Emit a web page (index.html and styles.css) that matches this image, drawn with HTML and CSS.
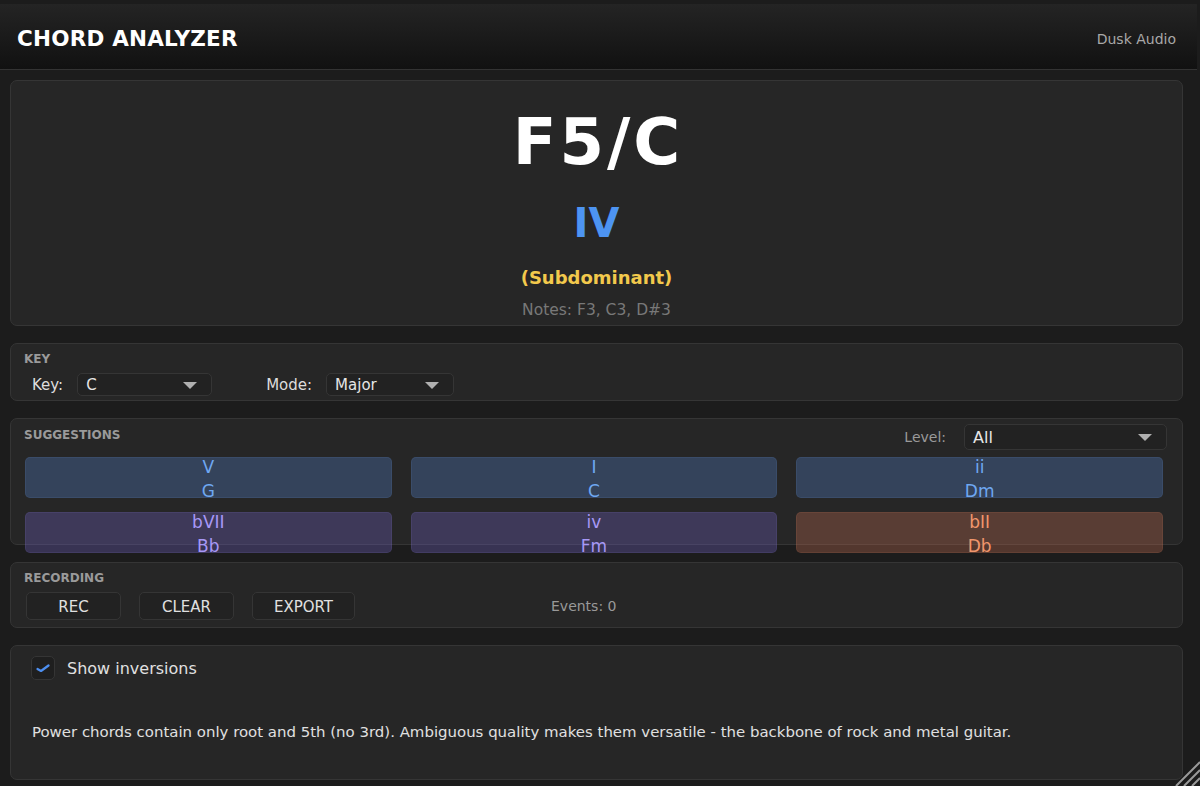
FILE: index.html
```html
<!DOCTYPE html>
<html lang="en">
<head>
    <meta charset="UTF-8">
    <meta name="viewport" content="width=device-width, initial-scale=1.0">
    <title>Chord Analyzer</title>
    <link rel="stylesheet" href="styles.css">
</head>
<body>
    <div class="header">
        <h1>CHORD ANALYZER</h1>
        <span class="brand">Dusk Audio</span>
    </div>

    <div class="main">
        <div class="panel chord">
            <div class="chord-name">F5/C</div>
            <div class="numeral">IV</div>
            <div class="function">(Subdominant)</div>
            <div class="notes">Notes: F3, C3, D#3</div>
        </div>

        <div class="panel key-panel">
            <div class="label">KEY</div>
            <div class="key-row">
                <span class="field-label">Key:</span>
                <div class="select key-select">C<span class="arrow"></span></div>
                <span class="field-label mode-label">Mode:</span>
                <div class="select mode-select">Major<span class="arrow"></span></div>
            </div>
        </div>

        <div class="panel suggestions">
            <div class="sugg-head">
                <div class="label">SUGGESTIONS</div>
                <span class="field-label level-label">Level:</span>
                <div class="select level-select">All<span class="arrow"></span></div>
            </div>
            <div class="sugg-grid">
                <div class="sugg blue"><span>V</span><span>G</span></div>
                <div class="sugg blue"><span>I</span><span>C</span></div>
                <div class="sugg blue"><span>ii</span><span>Dm</span></div>
                <div class="sugg purple"><span>bVII</span><span>Bb</span></div>
                <div class="sugg purple"><span>iv</span><span>Fm</span></div>
                <div class="sugg orange"><span>bII</span><span>Db</span></div>
            </div>
        </div>

        <div class="panel recording">
            <div class="label">RECORDING</div>
            <div class="rec-row">
                <button class="btn rec">REC</button>
                <button class="btn clear">CLEAR</button>
                <button class="btn export">EXPORT</button>
                <span class="events">Events: 0</span>
            </div>
        </div>

        <div class="panel info">
            <div class="check-row">
                <div class="checkbox">
                    <svg width="14" height="10" viewBox="0 0 14 10">
                        <path d="M1.5 6 L5 8 L12.5 2.5" fill="none" stroke="#4d8ff0" stroke-width="2.2" stroke-linecap="round" stroke-linejoin="round"/>
                    </svg>
                </div>
                <span>Show inversions</span>
            </div>
            <p class="desc">Power chords contain only root and 5th (no 3rd). Ambiguous quality makes them versatile - the backbone of rock and metal guitar.</p>
        </div>
    </div>

    <svg class="grip" width="26" height="26" viewBox="0 0 26 26">
        <path d="M26 2 L2 26 M26 10 L10 26 M26 18 L18 26" stroke="#9a9a9a" stroke-width="2"/>
    </svg>
</body>
</html>
```

FILE: styles.css
```css
body {
    font-family: "DejaVu Sans", sans-serif;
    margin: 0;
    padding: 4px 0 0 0;
    background-color: #1c1c1c;
    color: #dddddd;
    width: 1200px;
    height: 782px;
    overflow: hidden;
    position: relative;
}

.header {
    display: flex;
    align-items: center;
    justify-content: space-between;
    height: 66px;
    width: 1197px;
    padding: 4px 21px 0 17px;
    box-sizing: border-box;
    background: linear-gradient(#242424, #111111);
    border-bottom: 1px solid #333333;
}

.header h1 {
    margin: 0;
    font-size: 21.5px;
    font-weight: bold;
    color: #ffffff;
    letter-spacing: 0.2px;
}

.brand {
    font-size: 14px;
    color: #a8a8a8;
}

.main {
    padding: 10px 17px 0 10px;
    display: flex;
    flex-direction: column;
    gap: 17px;
}

.panel {
    background-color: #262626;
    border: 1px solid #353535;
    border-radius: 7px;
    box-sizing: border-box;
}

.label {
    font-size: 12px;
    font-weight: bold;
    color: #9a9a9a;
}

.field-label {
    font-size: 15px;
    color: #dddddd;
}

/* chord display */
.chord {
    height: 246px;
    display: flex;
    flex-direction: column;
    align-items: center;
}

.chord-name {
    font-size: 64px;
    font-weight: bold;
    color: #ffffff;
    margin-top: 21px;
    line-height: 80px;
    letter-spacing: 3px;
    padding-left: 3px;
}

.numeral {
    font-size: 40px;
    font-weight: bold;
    color: #4d94f2;
    line-height: 50px;
    margin-top: 16px;
}

.function {
    font-size: 18px;
    font-weight: bold;
    color: #f2c94c;
    margin-top: 18px;
    line-height: 24px;
}

.notes {
    font-size: 15.5px;
    color: #787878;
    margin-top: 11px;
}

/* key */
.key-panel {
    height: 58px;
    padding: 8px 0 0 13px;
}

.key-row {
    display: flex;
    align-items: center;
    margin-top: 7px;
    padding-left: 8px;
}

.select {
    position: relative;
    height: 23px;
    line-height: 23px;
    background-color: #222222;
    border: 1px solid #353535;
    border-radius: 5px;
    box-sizing: border-box;
    padding-left: 8px;
    font-size: 15px;
    color: #e6e6e6;
}

.arrow {
    position: absolute;
    right: 14px;
    top: 8px;
    width: 0;
    height: 0;
    border-left: 7px solid transparent;
    border-right: 7px solid transparent;
    border-top: 7px solid #b0b0b0;
}

.key-select {
    width: 135px;
    margin-left: 14px;
}

.mode-label {
    margin-left: 54px;
}

.mode-select {
    width: 128px;
    margin-left: 14px;
}

/* suggestions */
.suggestions {
    height: 127px;
    padding: 5px 19px 0 14px;
}

.sugg-head {
    display: flex;
    align-items: center;
    height: 26px;
}

.sugg-head .label {
    flex: 1;
    margin-left: -1px;
    margin-top: -4px;
}

.level-label {
    color: #9a9a9a;
    font-size: 14px;
    margin-right: 18px;
}

.level-select {
    width: 203px;
    height: 26px;
    line-height: 26px;
    font-size: 16px;
    margin-right: -4px;
}

.level-select .arrow {
    top: 9px;
}

.sugg-grid {
    display: grid;
    grid-template-columns: repeat(3, 1fr);
    column-gap: 19px;
    row-gap: 14px;
    margin-top: 7px;
}

.sugg {
    height: 41px;
    border-radius: 5px;
    display: flex;
    flex-direction: column;
    align-items: center;
    font-size: 17px;
    line-height: 24px;
    box-sizing: border-box;
}

.sugg span:first-child {
    margin-top: -3px;
}

.blue {
    background-color: rgba(81, 124, 192, 0.35);
    border: 1px solid rgba(110, 150, 210, 0.12);
    color: #6fa8f2;
}

.purple {
    background-color: rgba(109, 95, 187, 0.35);
    border: 1px solid rgba(140, 125, 210, 0.12);
    color: #a798f6;
}

.orange {
    background-color: rgba(187, 107, 81, 0.35);
    border: 1px solid rgba(210, 130, 100, 0.12);
    color: #f0966c;
}

/* recording */
.recording {
    height: 66px;
    padding: 8px 0 0 15px;
}

.recording .label {
    margin-left: -2px;
}

.rec-row {
    display: flex;
    align-items: center;
    gap: 18px;
    margin-top: 7px;
}

.btn {
    height: 28px;
    background-color: #222222;
    border: 1px solid #353535;
    border-radius: 5px;
    color: #e0e0e0;
    font-family: "DejaVu Sans", sans-serif;
    font-size: 15px;
    padding: 2px 0 0 0;
}

.rec {
    width: 95px;
}

.clear {
    width: 95px;
}

.export {
    width: 103px;
}

.events {
    font-size: 14px;
    color: #999999;
    margin-left: 178px;
}

/* info */
.info {
    height: 135px;
    padding: 10px 0 0 20px;
}

.check-row {
    display: flex;
    align-items: center;
    gap: 12px;
    font-size: 16px;
    color: #e0e0e0;
}

.checkbox {
    width: 24px;
    height: 24px;
    box-sizing: border-box;
    border: 1px solid #353535;
    border-radius: 5px;
    background-color: #1f1f1f;
    display: flex;
    align-items: center;
    justify-content: center;
}

.desc {
    margin: 43px 0 0 1px;
    font-size: 14.95px;
    color: #e0e0e0;
}

.grip {
    position: absolute;
    right: 0;
    bottom: 0;
}
```
